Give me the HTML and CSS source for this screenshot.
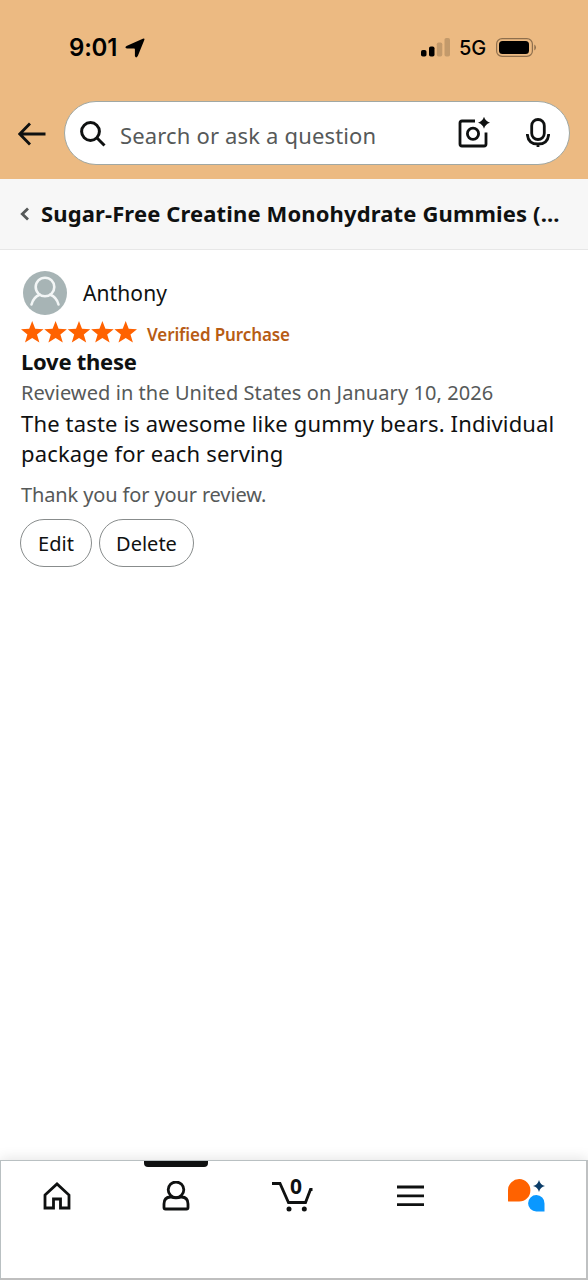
FILE: index.html
```html
<!DOCTYPE html>
<html lang="en">
<head>
    <meta charset="UTF-8">
    <meta name="viewport" content="width=device-width, initial-scale=1.0">
    <title>Your Review</title>
    <link rel="stylesheet" href="styles.css">
</head>
<body>

    <header class="top">
        <div class="status-bar">
            <span class="time">9:01</span>
            <svg class="location" width="20" height="20" viewBox="0 0 20 20"><path d="M17.800 .7Q20 -.2 19.300 2L12.800 18Q11 20.800 9.900 18V11.200Q9.900 10.400 9.100 10.400H2Q-.9 9.600 1.500 7.900Z"/></svg>
            <svg class="signal" width="29" height="19" viewBox="0 0 29 19">
                <rect x="0" y="12" width="5.500" height="6.500" rx="1.800"/>
                <rect x="8" y="8.500" width="5.500" height="10" rx="1.800"/>
                <rect class="dim" x="15.800" y="4.500" width="5.500" height="14" rx="1.800"/>
                <rect class="dim" x="23.500" y="0" width="5.500" height="18.500" rx="1.800"/>
            </svg>
            <span class="network">5G</span>
            <svg class="battery" width="41" height="19" viewBox="0 0 41 19">
                <rect x=".6" y=".6" width="35.800" height="17.800" rx="5.500" fill="none" stroke="#8e6f4d" stroke-width="1.200"/>
                <rect x="3" y="3" width="30" height="13" rx="3.500"/>
                <path d="M38.300 6.500Q40 7.500 40 9.500T38.300 12.500Z" fill="#8e6f4d"/>
            </svg>
        </div>
        <div class="search-row">
            <svg class="back" width="28" height="24" viewBox="0 0 28 24"><path d="M12 1.500L1.800 12L12 22.500M2 12H27.500"/></svg>
            <div class="search-box">
                <svg class="search-icon" width="26" height="26" viewBox="0 0 26 26"><circle cx="10.500" cy="10.500" r="8.900"/><path d="M16.800 16.800L24.500 24.500"/></svg>
                <span class="placeholder">Search or ask a question</span>
                <svg class="camera" width="32" height="32" viewBox="0 0 32 32">
                    <path d="M17 4H4Q2 4 2 6V27Q2 29 4 29H26Q28 29 28 27V15.500"/>
                    <circle cx="15" cy="16.800" r="5.600"/>
                    <path class="spark" d="M26 -.3Q27.300 4.300 32 5.700Q27.300 7 26 11.700Q24.700 7 20 5.700Q24.700 4.300 26 -.3Z"/>
                </svg>
                <svg class="mic" width="24" height="30" viewBox="0 0 24 30"><rect x="5.700" y="1.500" width="12.600" height="20" rx="6.300"/><path d="M1.300 16Q2 26 12 26T22.700 16M12 26V29"/></svg>
            </div>
        </div>
    </header>

    <div class="product-bar">
        <svg class="chevron" width="10" height="14" viewBox="0 0 10 14"><path d="M8 1.500L2.300 7L8 12.500"/></svg>
        <h1>Sugar-Free Creatine Monohydrate Gummies (...</h1>
    </div>

    <main class="review">
        <div class="profile">
            <svg width="44" height="44" viewBox="0 0 44 44"><circle cx="22" cy="22" r="22" fill="#a7b4b5"/><g fill="none" stroke="#f3f6f6" stroke-width="2.600" stroke-linecap="round"><circle cx="22" cy="16" r="9.300"/><path d="M8.500 33.500Q10.500 26 16.800 23.800M35.500 33.500Q33.500 26 27.200 23.800"/></g></svg>
            <span class="name">Anthony</span>
        </div>
        <div class="rating">
            <svg width="116" height="22" viewBox="0 0 116 22">
                <defs><path id="star" d="M11.200 0L14.200 7.800L22.500 8.200L16 13.400L18.400 21.500L11.200 17L4 21.500L6.400 13.400L-.1 8.200L8.200 7.800Z"/></defs>
                <use href="#star"/>
                <use href="#star" x="23.400"/>
                <use href="#star" x="46.800"/>
                <use href="#star" x="70.200"/>
                <use href="#star" x="93.500"/>
            </svg>
            <span class="verified">Verified Purchase</span>
        </div>
        <h2>Love these</h2>
        <p class="date">Reviewed in the United States on January 10, 2026</p>
        <p class="text">The taste is awesome like gummy bears. Individual<br>package for each serving</p>
        <p class="thanks">Thank you for your review.</p>
        <div class="actions">
            <button class="btn edit">Edit</button>
            <button class="btn delete">Delete</button>
        </div>
    </main>

    <nav class="tab-bar">
        <a class="tab"><svg class="home" width="28" height="28" viewBox="0 0 28 28"><path d="M2 13L14 2L26 13V26H17.500V17H10.500V26H2Z"/></svg></a>
        <a class="tab active"><svg width="28" height="30" viewBox="0 0 28 30"><circle cx="14" cy="8.800" r="7.800"/><path d="M8.500 16Q2 16.200 2 23V26.500Q2 28 3.500 28H24.500Q26 28 26 26.500V23Q26 16.200 19.500 16Q14 17.800 8.500 16Z"/></svg></a>
        <a class="tab cart">
            <svg width="42" height="36" viewBox="0 0 42 36"><path d="M0 5.500H8L16.500 24.500H33.500L38.500 11.500H40.500"/><circle class="wheel" cx="17" cy="31" r="2.500"/><circle class="wheel" cx="32.300" cy="31" r="2.500"/></svg>
            <span class="count">0</span>
        </a>
        <a class="tab"><svg class="menu" width="28" height="22" viewBox="0 0 28 22"><path d="M1 2H28M1 10.800H28M1 19.600H28"/></svg></a>
        <a class="tab"><svg class="assistant" width="38" height="34" viewBox="0 0 38 34">
            <path d="M0 22V11A11.200 11.200 0 1 1 11.200 22.500H.8Q0 22.500 0 22Z" fill="#ff6200"/>
            <path d="M36.500 24.500A8.200 8.200 0 1 0 28.300 32.500H36.500Z" fill="#0a98ff"/>
            <path d="M31 1Q32.200 5.800 37 7Q32.200 8.200 31 13Q29.800 8.200 25 7Q29.800 5.800 31 1Z" fill="#0b3d69"/>
        </svg></a>
    </nav>

</body>
</html>
```
FILE: styles.css
```css
* {
    box-sizing: border-box;
}

body {
    font-family: 'Noto Sans', sans-serif;
    color: #0f1111;
    background: white;
    margin: 0;
    height: 1280px;
    display: flex;
    flex-direction: column;
}

h1, h2, p {
    margin: 0;
    white-space: nowrap;
}

svg {
    display: block;
    flex-shrink: 0;
}

.top {
    height: 179px;
    background: #ecba82;
}

.status-bar {
    display: flex;
    align-items: center;
    height: 101px;
    padding: 0 52px 6px 69px;
    color: black;
    font-family: Inter, sans-serif;
}

.time {
    width: 56px;
    font-size: 24px;
    font-weight: 600;
    letter-spacing: -0.2px;
}

.signal {
    margin-left: auto;
}

.signal .dim {
    fill: #c39a6b;
}

.network {
    width: 46px;
    padding-left: 9px;
    font-size: 20px;
    font-weight: 500;
    white-space: nowrap;
}

.battery {
    margin-right: -1px;
}

.search-row {
    display: flex;
    align-items: center;
    padding: 0 18px;
}

.back, .search-icon, .camera, .mic, .chevron {
    fill: none;
    stroke: #0f1111;
    stroke-width: 2.8;
}

.back {
    margin-top: 2px;
}

.search-box {
    display: flex;
    align-items: center;
    width: 506px;
    height: 64px;
    margin-left: 18px;
    padding: 0 19px 0 15px;
    background: white;
    border: 1px solid #a0a8a4;
    border-radius: 32px;
}

.search-icon {
    margin-top: 2px;
    stroke-width: 3;
}

.placeholder {
    margin: 3px auto 0 14px;
    color: #565959;
    font-size: 22px;
    letter-spacing: 0.16px;
}

.camera {
    margin-right: 36px;
}

.camera .spark {
    fill: #0f1111;
    stroke: none;
}

.product-bar {
    display: flex;
    align-items: center;
    height: 71px;
    padding-left: 20px;
    background: #f7f7f7;
    border-bottom: 1px solid #e7e7e7;
}

.chevron {
    stroke: #565959;
}

h1 {
    margin: -2px 0 0 11px;
    font-size: 22px;
    font-weight: 700;
    letter-spacing: 0.13px;
}

.review {
    flex: 1;
    padding: 21px 20px 0 21px;
}

.profile {
    display: flex;
    align-items: center;
    padding-left: 2px;
}

.name {
    margin-left: 16px;
    font-size: 21px;
    letter-spacing: 0.1px;
}

.rating {
    display: flex;
    height: 31px;
    padding-top: 6px;
    fill: #ff6200;
}

.verified {
    margin-left: 10px;
    color: #b75c14;
    font-size: 17px;
    font-weight: 600;
    line-height: 28px;
    letter-spacing: -0.1px;
}

h2 {
    margin-bottom: 2px;
    font-size: 22px;
    line-height: 30px;
    letter-spacing: -0.25px;
}

.date, .thanks {
    color: #565959;
    font-size: 20px;
    line-height: 30px;
}

.date {
    letter-spacing: 0.07px;
}

.text {
    font-size: 22px;
    line-height: 30px;
    letter-spacing: 0.16px;
}

.thanks {
    margin-top: 12px;
    letter-spacing: -0.13px;
}

.actions {
    display: flex;
    gap: 7px;
    margin: 9px 0 0 -1px;
}

.btn {
    height: 48px;
    padding: 0;
    color: #0f1111;
    background: white;
    border: 1px solid #888c8c;
    border-radius: 24px;
    font-family: inherit;
    font-size: 20px;
}

.edit {
    width: 72px;
}

.delete {
    width: 95px;
}

.tab-bar {
    display: flex;
    height: 120px;
    border: 1px solid #b9c0c2;
    border-right: 2px solid #bfc1c2;
    border-bottom: 2px solid #bfbfbf;
    box-shadow: 0 -2px 12px rgba(0, 0, 0, 0.1);
}

.tab {
    position: relative;
    display: flex;
    justify-content: center;
    align-items: center;
    height: 70px;
    margin-left: -2px;
    flex: 1;
    fill: none;
    stroke: #0f1111;
    stroke-width: 2.8;
}

.home {
    margin-right: 4px;
}

.menu {
    margin-left: 1px;
}

.active::before {
    content: "";
    position: absolute;
    top: 0;
    width: 64px;
    height: 6px;
    background: #0f1111;
    border-radius: 0 0 4px 4px;
}

.wheel {
    fill: #0f1111;
    stroke: none;
}

.count {
    position: absolute;
    top: 11px;
    padding-left: 7px;
    font-size: 21px;
    font-weight: 700;
}

.assistant {
    stroke: none;
}
```
